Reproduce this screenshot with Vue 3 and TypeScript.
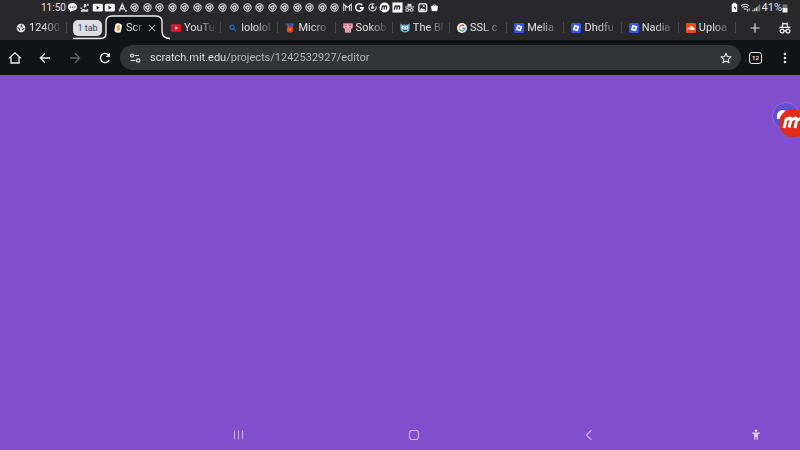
<script setup lang="ts">
import { ref } from 'vue'

interface Tab {
  title: string
  icon: string
}

const notifications: string[] = [
  'chat', 'contacts', 'video', 'video', 'letter',
  ...Array<string>(17).fill('chrome'),
  'mail', 'google', 'sync', 'round-m', 'square-m', 'incognito', 'photo', 'bag',
]

const tabs: Tab[] = [
  { title: 'YouTu', icon: 'youtube' },
  { title: 'lololol', icon: 'search' },
  { title: 'Micro', icon: 'medal' },
  { title: 'Sokob', icon: 'soko' },
  { title: 'The Bl', icon: 'robot' },
  { title: 'SSL c', icon: 'google-color' },
  { title: 'Melia', icon: 'roblox' },
  { title: 'Dhdfu', icon: 'roblox' },
  { title: 'Nadia', icon: 'roblox' },
  { title: 'Uploa', icon: 'cloud' },
]

const address = ref('scratch.mit.edu/projects/1242532927/editor')
</script>

<template>
  <div class="screen">
    <svg class="sprite" aria-hidden="true">
      <symbol id="chat" viewBox="0 0 12 12">
        <path d="M6 1.200c3 0 5 1.800 5 4.200S9 9.600 6 9.600L3.400 11V9C1.900 8.300 1 7 1 5.400 1 3 3 1.200 6 1.200z" fill="#f4f4f4" />
        <path d="M3 5h1.300v1.300H3zM5.400 5h1.300v1.300H5.400zM7.800 5h1.300v1.300H7.800z" fill="#29292b" />
      </symbol>
      <symbol id="contacts" viewBox="0 0 12 12">
        <path d="M2 10.500Q2 7.500 5 7.500L7.500 8.500 10 7.500V10.500zM5 3a1.600 1.600 0 1 1 2.500 1.800L5.500 7zM9 2h1.500v2H9zM1.500 6h2v1.300H1.500z" fill="#ddd" />
      </symbol>
      <symbol id="video" viewBox="0 0 12 12">
        <rect x=".8" y="1.800" width="11" height="8.600" rx="1.500" fill="#fafafa" />
        <path d="M5 4.200v4l3.300-2z" fill="#222" />
      </symbol>
      <symbol id="letter" viewBox="0 0 12 12">
        <path d="M2.500 10 5.700 2.500l3 6.500M4 7.500h4" fill="none" stroke="#eee" stroke-width="1.600" />
        <circle cx="9.700" cy="9.500" r="1" fill="#eee" />
      </symbol>
      <symbol id="chrome" viewBox="0 0 12 12">
        <circle cx="6" cy="6" r="4" fill="#3a3a3c" stroke="#d5d5d5" stroke-width="1.100" />
        <circle cx="6" cy="6" r="1.700" fill="#3a3a3c" stroke="#f0f0f0" stroke-width="1.100" />
        <path d="M6 4.200h3.600M4.500 7 2.700 4M7.500 7 5.800 10" stroke="#ddd" stroke-width=".9" />
      </symbol>
      <symbol id="mail" viewBox="0 0 12 12">
        <path d="M1.800 9.800V2.500L6 6l4.200-3.500v7.300M3.800 9.500v-5M8.200 9.500v-5" fill="none" stroke="#d5d5d5" stroke-width="1.200" />
      </symbol>
      <symbol id="google" viewBox="0 0 12 12">
        <path d="M9 3.500A4 4 0 1 0 9.800 6.400H6.300" fill="none" stroke="#fff" stroke-width="1.800" />
      </symbol>
      <symbol id="sync" viewBox="0 0 12 12">
        <path d="M8 2.400A4 4 0 1 0 9.800 4.500M2.300 7.500A4 4 0 0 0 9.600 7.500" fill="none" stroke="#ddd" stroke-width="1.100" />
        <circle cx="6" cy="6" r="1.700" fill="#ddd" /><path d="M6 2v3" stroke="#ddd" />
      </symbol>
      <symbol id="round-m" viewBox="0 0 12 12">
        <circle cx="6" cy="6" r="5.500" fill="#fff" />
        <path d="M2.800 8.500 3.800 4M3.600 5.200C6 3 6.300 4.500 5.400 8.300M6 5.200c2.600-2.200 3-.6 1.900 3" fill="none" stroke="#222" stroke-width="1.300" />
      </symbol>
      <symbol id="square-m" viewBox="0 0 12 12">
        <path d="M.5 .5h11v11H.5z" fill="#fff" />
        <path d="M2.500 8.500 3.500 4M3.400 5.200C5.800 3 6.100 4.500 5.200 8.300M6 5.200c2.600-2.200 3-.6 1.900 3" fill="none" stroke="#222" stroke-width="1.400" />
      </symbol>
      <symbol id="incognito" viewBox="0 0 12 12">
        <path d="M3.500 4.600 4.200 1.500l1.800.6 1.800-.6.700 3.100zM1 5h10v1H1z" fill="#d8d8d8" />
        <g fill="none" stroke="#d8d8d8" stroke-width="1.100"><circle cx="3.600" cy="8.600" r="1.600" /><circle cx="8.400" cy="8.600" r="1.600" /><path d="M5.200 8.300h1.600" /></g>
      </symbol>
      <symbol id="incognito-line" viewBox="0 0 14 14">
        <g fill="none" stroke="#eee" stroke-width="1.300"><path d="M4.300 6 4.900 2.400l2.100.5 2.100-.5.600 3.600M1.500 6.400h11" /><circle cx="4.100" cy="10" r="1.900" /><circle cx="9.900" cy="10" r="1.900" /><path d="M6 9.600h2" /></g>
      </symbol>
      <symbol id="photo" viewBox="0 0 12 12">
        <rect x="2" y="2" width="8.500" height="8.500" rx="1.200" fill="#333" stroke="#f4f4f4" stroke-width="1.400" />
        <path d="m2.500 9.500 2.600-3 1.500 1.600 1-1L10 9.500z" fill="#fff" /><circle cx="7.500" cy="4.500" r=".9" fill="#fff" />
      </symbol>
      <symbol id="bag" viewBox="0 0 12 12">
        <path d="M2.800 4.500h6.400L8.600 9.500H3.400z" fill="#fff" stroke="#fff" stroke-linejoin="round" /><path d="M4.500 4.500a1.500 1.500 0 0 1 3 0" fill="none" stroke="#ddd" />
      </symbol>
      <symbol id="globe" viewBox="0 0 12 12">
        <circle cx="6" cy="6" r="5.200" fill="#e8eaed" />
        <path d="M1.800 5.500 4 6.500 4.500 9M6.500 2l-.5 2 2 1M7 8.500 9 7l1-.5" fill="none" stroke="#333" stroke-width="1.300" />
      </symbol>
      <symbol id="scratch" viewBox="0 0 12 12">
        <rect x="2.200" y=".4" width="8" height="11.200" rx="2.800" fill="#fff" transform="rotate(8 6 6)" />
        <path d="M4.200 3.200 8 2.200 8.500 8.500 4.800 10z" fill="#e9a93c" />
      </symbol>
      <symbol id="youtube" viewBox="0 0 12 12">
        <rect y="1.500" width="12" height="9" rx="1.500" fill="#f3122b" />
        <path d="M1.500 4.500h2.300M1.500 7h2M8.500 4.500h2M8.500 7.500h2" stroke="#8d0c1d" /><path d="M4.800 3.800v4.400L8.500 6z" fill="#fff" />
      </symbol>
      <symbol id="search" viewBox="0 0 12 12">
        <g fill="none" stroke="#2764bd" stroke-width="1.500"><circle cx="5" cy="5" r="2.500" /><path d="m7 7 2.800 3" /></g>
      </symbol>
      <symbol id="medal" viewBox="0 0 12 12">
        <path d="M1 .5h10L8.500 6h-5z" fill="#276ac5" /><path d="M5 .5h2v4H5z" fill="#a62939" />
        <circle cx="6" cy="7.800" r="4" fill="#ed3d15" /><path d="M4.500 6.500 7 9M7.500 6.500l-3 2.800" stroke="#ff9a44" />
      </symbol>
      <symbol id="soko" viewBox="0 0 12 12">
        <path d="M.5 .5h11V6l-2 1v4.500h-7V7l-2-1z" fill="#ffd9dc" />
        <path d="M1.500 2.500h3M6.500 2.500h4M2 5h3M7 5h3M4 7.500h4M4 9.700h1.500M7 9.700h1.500" stroke="#e32643" stroke-width="1.300" />
      </symbol>
      <symbol id="robot" viewBox="0 0 12 12">
        <path d="M.5 .5 3 2h6L11.500 .5V7c0 6-11 6-11 0z" fill="#68b8d0" />
        <circle cx="4" cy="5.500" r="1.800" fill="#e9ffff" /><circle cx="8" cy="5.500" r="1.800" fill="#e9ffff" /><path d="M4 5h1v1.300H4zM7.500 5h1v1.300h-1zM4 8.500h4V10H4z" fill="#233b4a" />
      </symbol>
      <symbol id="google-color" viewBox="0 0 12 12">
        <circle cx="6" cy="6" r="5.900" fill="#fff" />
        <g fill="none" stroke-width="1.700"><path d="M8.600 3.600A3.500 3.500 0 0 0 2.900 4.500" stroke="#ea4335" /><path d="M2.900 4.500a3.500 3.500 0 0 0 0 3" stroke="#fbbc05" /><path d="M2.900 7.500A3.500 3.500 0 0 0 8.300 8.700" stroke="#34a853" /><path d="M8.300 8.700A3.500 3.500 0 0 0 9.500 6.300H6.200" stroke="#4285f4" /></g>
      </symbol>
      <symbol id="roblox" viewBox="0 0 12 12">
        <rect width="12" height="12" rx="1.500" fill="#3156e8" />
        <path d="m4 2.200 6 1.700L8.200 10l-6-1.700zM5.200 4.800l-.5 2 2.100.6.600-2z" fill="#fff" fill-rule="evenodd" />
      </symbol>
      <symbol id="cloud" viewBox="0 0 12 12">
        <rect width="12" height="12" rx="1.200" fill="#f54716" /><path d="M2 8V6.300M3.500 8V5.300M5 8V4.500h1.500V8" stroke="#fff" fill="none" /><path d="M5.500 8.400V4c2.300-.8 3 .9 3 1.700 2.600-.2 2.600 2.700.6 2.700z" fill="#fff" />
      </symbol>
    </svg>

    <header class="status">
      <time class="clock">11:50</time>
      <div class="notices">
        <svg v-for="(name, i) in notifications" :key="i" class="notice"><use :href="'#' + name" /></svg>
      </div>
      <div class="system">
        <svg class="notice" viewBox="0 0 12 12"><rect x="3" y="2" width="6" height="9" rx="1" fill="#fff" /><path d="M4.500 .8h3V2h-3z" fill="#fff" /><path d="M6.500 4 5 6.800h1.500V9L8 6H6.500z" fill="#222" /></svg>
        <svg class="notice" viewBox="0 0 12 12"><path d="M1 4.500c3-2.800 6.500-2.800 9 0M2.600 6.200c2-1.800 4.500-1.800 6 0M4.200 8q1.300-1 2.700 0" fill="none" stroke="#ddd" stroke-width="1.200" /><path d="M8 10.500V7.500M10 7v3" stroke="#ddd" /></svg>
        <svg class="notice" viewBox="0 0 12 12"><path d="M1 10 10 2v8z" fill="#777" /><path d="M2 10V8.500M4 10V7M6 10V6" stroke="#ccc" /></svg>
        <span>41%</span>
        <svg class="battery" viewBox="0 0 6 10"><path d="M.5 1.500h5V5h-5z" fill="#777" /><path d="M.5 5h5v4.500h-5z" fill="#eee" /></svg>
      </div>
    </header>

    <nav class="tabs" aria-label="Tabs">
      <button class="tab first" type="button"><svg class="favicon"><use href="#globe" /></svg><span class="title">12400</span></button>
      <div class="group">
        <svg class="outline" viewBox="0 0 98 25" aria-hidden="true"><path d="M0 23.500H28Q33 23.500 33 18V7Q33 1 39 1H83Q89 1 89 7V16Q89 23.500 96 23.500V25H0z" fill="#111216" /><path d="M0 23.500H28Q33 23.500 33 18V7Q33 1 39 1H83Q89 1 89 7V16Q89 23.500 97 23.500" fill="none" stroke="#eee" stroke-width="1.400" /></svg>
        <button class="chip" type="button">1 tab</button>
        <div class="current">
          <svg class="favicon"><use href="#scratch" /></svg><span class="title">Scr</span>
          <button class="close" type="button" aria-label="Close tab"><svg viewBox="0 0 8 8"><path d="m1 1 6 6M7 1 1 7" fill="none" stroke="#ccc" /></svg></button>
        </div>
      </div>
      <button v-for="tab in tabs" :key="tab.title" class="tab" type="button">
        <svg class="favicon"><use :href="'#' + tab.icon" /></svg><span class="title">{{ tab.title }}</span>
      </button>
      <div class="strip-end">
        <button class="icon" type="button" aria-label="New tab"><svg viewBox="0 0 14 14"><path d="M7 2.500v9M2.500 7h9" stroke="#ddd" stroke-width="1.200" /></svg></button>
        <button class="icon" type="button" aria-label="Incognito tabs"><svg><use href="#incognito-line" /></svg></button>
      </div>
    </nav>

    <div class="toolbar">
      <button class="icon" type="button" aria-label="Home"><svg viewBox="0 0 14 14"><path d="M3 12V6.500H1.800L7 1.800l5.200 4.700H11V12z" fill="none" stroke="#eee" stroke-width="1.300" /></svg></button>
      <button class="icon" type="button" aria-label="Back"><svg viewBox="0 0 14 14"><path d="M12 7H2.500M7 2.300 2.300 7 7 11.700" fill="none" stroke="#eee" stroke-width="1.300" /></svg></button>
      <button class="icon" type="button" aria-label="Forward"><svg viewBox="0 0 14 14"><path d="M2 7h9.500M7 2.300 11.700 7 7 11.700" fill="none" stroke="#626367" stroke-width="1.300" /></svg></button>
      <button class="icon" type="button" aria-label="Reload"><svg viewBox="0 0 14 14"><path d="M11.200 9A4.600 4.600 0 1 1 10.700 4.200L11.500 5.300" fill="none" stroke="#eee" stroke-width="1.400" /><path d="M12 1.800V6H7.800z" fill="#eee" /></svg></button>
      <div class="address">
        <button class="icon" type="button" aria-label="Site settings"><svg viewBox="0 0 14 14"><g fill="none" stroke="#ddd" stroke-width="1.200"><path d="M6.500 4.500H11M2.500 9.500h5" /><circle cx="4" cy="4.500" r="1.500" /><circle cx="10.200" cy="9.500" r="1.700" /></g></svg></button>
        <input v-model="address" class="url" type="text" aria-label="Address" spellcheck="false">
        <button class="icon" type="button" aria-label="Bookmark"><svg viewBox="0 0 14 14"><path d="m7 2.300 1.400 3.200 3.500.4-2.600 2.400.7 3.500L7 10l-3 1.800.7-3.500-2.600-2.400 3.500-.4z" fill="none" stroke="#eee" stroke-width="1.100" stroke-linejoin="round" /></svg></button>
      </div>
      <button class="count" type="button" aria-label="12 open tabs">12</button>
      <button class="icon" type="button" aria-label="Menu"><svg viewBox="0 0 14 14"><g fill="#f2f2f2"><circle cx="7" cy="3" r="1.300" /><circle cx="7" cy="7" r="1.300" /><circle cx="7" cy="11" r="1.300" /></g></svg></button>
    </div>

    <main class="page">
      <button class="bubble" type="button" aria-label="Screen recorder">
        <svg viewBox="0 0 30 38"><circle cx="15" cy="15" r="13.500" fill="#5e51cd" stroke="#9465de" /><path d="M6 18q-1-8 5-9l5 1v8z" fill="#fff" /><circle cx="22" cy="22" r="14" fill="#df2b19" /><path d="m13 27 2.500-10M15 19q5-4 5 0l-2 7.500M20 19.500q6-5 5.500 0L24 27M25.500 20q4-4 7-2" fill="none" stroke="#fff" stroke-width="3" stroke-linejoin="round" /></svg>
      </button>
      <nav class="system-nav" aria-label="System">
        <button class="icon" type="button" aria-label="Recent apps"><svg viewBox="0 0 14 14"><path d="M2.500 2.500v9M6.500 2.500v9M10.500 2.500v9" stroke="#c6a9ef" /></svg></button>
        <button class="icon" type="button" aria-label="Home screen"><svg viewBox="0 0 14 14"><rect x="2.500" y="2.500" width="9" height="9" rx="2.500" fill="none" stroke="#d0b6f1" stroke-width="1.100" /></svg></button>
        <button class="icon" type="button" aria-label="Go back"><svg viewBox="0 0 14 14"><path d="M9.500 2.300 4.500 7l5 4.700" fill="none" stroke="#c9adf0" stroke-width="1.200" /></svg></button>
        <button class="icon" type="button" aria-label="Accessibility"><svg viewBox="0 0 14 14"><circle cx="7" cy="2.800" r="1.200" fill="#eee3fb" /><path d="M3 5.200h8M7 5v4M5.700 5.500v6.300M8.300 5.500v6.300" fill="none" stroke="#e2d0f6" stroke-width="1.300" /></svg></button>
      </nav>
    </main>
  </div>
</template>

<style>
body {
  margin: 0;
  background: #814fcd;
}
</style>

<style scoped>
.screen {
  display: flex;
  flex-direction: column;
  min-height: 100vh;
  background: #28282a;
  color: #e2e3e5;
  font: 11px/14px Roboto, "Liberation Sans", sans-serif;
}

.sprite {
  position: absolute;
  width: 0;
  height: 0;
}

button {
  box-sizing: border-box;
  margin: 0;
  padding: 0;
  border: 0;
  background: none;
  color: inherit;
  font: inherit;
}

svg {
  display: block;
}

.status {
  display: flex;
  align-items: center;
  height: 15px;
  padding: 0 12px 0 41px;
}

.clock {
  flex: none;
  width: 25px;
  font-size: 10px;
}

.notices {
  display: grid;
  grid-template-columns: repeat(30, 1fr);
  justify-items: center;
  width: 375px;
}

.notice {
  width: 11px;
  height: 11px;
}

.system {
  display: flex;
  align-items: center;
  margin-left: auto;
}

.battery {
  width: 6px;
  height: 10px;
}

.tabs {
  display: flex;
  height: 25px;
}

.tab {
  position: relative;
  display: flex;
  flex: 1 1 0;
  align-items: center;
  gap: 3px;
  min-width: 0;
  padding: 0 4px 0 7px;
}

.tab::after {
  content: "";
  position: absolute;
  right: 0;
  width: 1px;
  height: 11px;
  background: #49494c;
}

.tab.first {
  flex: 0 0 67px;
  padding-left: 16px;
}

.favicon {
  flex: none;
  width: 10px;
  height: 10px;
}

.title {
  flex: 1 1 0;
  min-width: 0;
  overflow: hidden;
  text-align: left;
  white-space: nowrap;
  mask-image: linear-gradient(to right, #000 40%, transparent);
}

.group {
  position: relative;
  display: flex;
  flex: 0 0 91px;
  align-items: center;
  min-width: 0;
  margin-left: 6px;
}

.outline {
  position: absolute;
  top: 0;
  left: 0;
  width: 98px;
  height: 25px;
}

.chip {
  position: relative;
  flex: none;
  width: 29px;
  height: 16px;
  border-radius: 5px;
  background: #dedee2;
  color: #3c3c40;
  font-size: 9px;
}

.current {
  position: relative;
  display: flex;
  flex: 1;
  align-items: center;
  gap: 3px;
  min-width: 0;
  padding: 0 8px 0 11px;
}

.close {
  flex: none;
  width: 8px;
  height: 8px;
}

.strip-end {
  display: flex;
  flex: 0 0 64px;
  align-items: center;
  justify-content: space-between;
  box-sizing: border-box;
  padding: 0 8px 0 12px;
}

.icon {
  flex: none;
  width: 14px;
  height: 14px;
}

.icon svg {
  width: 14px;
  height: 14px;
}

.toolbar {
  display: flex;
  align-items: center;
  gap: 16px;
  height: 35px;
  padding: 0 8px;
  background: #111216;
}

.address {
  display: flex;
  flex: 1;
  align-items: center;
  gap: 8px;
  height: 25px;
  margin: 0 -8px;
  padding: 0 8px;
  border-radius: 13px;
  background: #333438;
}

.url {
  flex: 1;
  min-width: 0;
  padding: 0;
  border: 0;
  outline: 0;
  background: linear-gradient(to right, #ececee 76px, #bcbdc1 76px);
  background-clip: text;
  color: #ececee;
  -webkit-text-fill-color: transparent;
  font: inherit;
}

.count {
  width: 13px;
  height: 12px;
  border: 1px solid #e8e8ea;
  border-radius: 3px;
  font-size: 6px;
  font-weight: 700;
  line-height: 10px;
}

.page {
  position: relative;
  display: flex;
  flex: 1;
  flex-direction: column;
  justify-content: flex-end;
  background: #814fcd;
}

.bubble {
  position: absolute;
  top: 26px;
  right: 0;
  width: 29px;
  height: 38px;
  overflow: hidden;
}

.bubble svg {
  width: 30px;
  height: 38px;
}

.system-nav {
  display: grid;
  grid-template-columns: 21fr 21fr 20fr 14px;
  padding: 0 37px 8px 232px;
}
</style>
